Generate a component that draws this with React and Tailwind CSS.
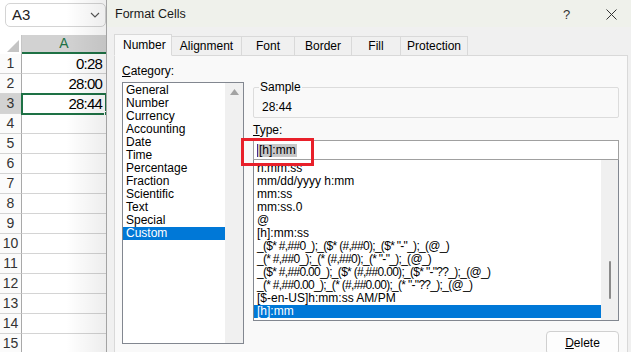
import React from 'react'

const categories = ['General', 'Number', 'Currency', 'Accounting', 'Date', 'Time', 'Percentage', 'Fraction', 'Scientific', 'Text', 'Special', 'Custom']

const types = [
  'h:mm:ss',
  'mm/dd/yyyy h:mm',
  'mm:ss',
  'mm:ss.0',
  '@',
  '[h]:mm:ss',
  '_($* #,##0_);_($* (#,##0);_($* "-"_);_(@_)',
  '_(* #,##0_);_(* (#,##0);_(* "-"_);_(@_)',
  '_($* #,##0.00_);_($* (#,##0.00);_($* "-"??_);_(@_)',
  '_(* #,##0.00_);_(* (#,##0.00);_(* "-"??_);_(@_)',
  '[$-en-US]h:mm:ss AM/PM',
  '[h]:mm',
]

const tabs = [
  { name: 'Number', w: 'w-[58px]' },
  { name: 'Alignment', w: 'w-[71px]' },
  { name: 'Font', w: 'w-[54px]' },
  { name: 'Border', w: 'w-[58px]' },
  { name: 'Fill', w: 'w-[50px]' },
  { name: 'Protection', w: 'w-[68px]' },
]

const cells = ['0:28', '28:00', '28:44']

const Sheet = () => (
  <div className="relative w-[106px] shrink-0 bg-white overflow-hidden font-['Liberation_Sans',sans-serif]">
    <div className="h-[35px] pt-[3px] pl-[5px]">
      <div className="w-[101px] h-[24px] rounded-[5px] border border-[#d4d4d4] flex items-center justify-between pl-[6px] pr-[5px] text-[15px] text-[#222]">
        <span>A3</span>
        <svg width="10" height="6" viewBox="0 0 10 6"><path d="M1 1 L5 5 L9 1" fill="none" stroke="#555" strokeWidth="1.1" /></svg>
      </div>
    </div>
    <div className="flex h-[19px]">
      <div className="w-[22px] border-r border-[#c6c6c6] flex items-end justify-end pr-[2px] pb-[2px]">
        <svg width="12" height="12" viewBox="0 0 12 12"><path d="M12 0 L12 12 L0 12 Z" fill="#c4c4c4" /></svg>
      </div>
      <div className="w-[84px] bg-[#d2d2d2] border-b-2 border-[#1e7145] text-center text-[14px] leading-[17px] text-[#1e7145]">A</div>
    </div>
    {Array.from({ length: 15 }, (_, i) => (
      <div key={i} className="flex h-[20px]">
        <div className={`w-[22px] border-r border-[#a9a9a9] border-b border-b-[#d4d4d4] text-center text-[14px] leading-[19px] text-[#333] ${i === 2 ? 'bg-[#d2d2d2]' : 'bg-[#fbfbfb]'}`}>{i + 1}</div>
        <div className={`relative w-[84px] border-b border-[#d4d4d4] text-right pr-[4px] text-[15px] leading-[19px] tracking-[-0.8px] text-black ${i === 2 ? 'outline-2 outline-[#1e7145] -outline-offset-1' : ''}`}>
          {cells[i] || ''}
          {i === 2 && <div className="absolute right-[-3px] bottom-[-3px] w-[5px] h-[5px] bg-[#1e7145] border border-white" />}
        </div>
      </div>
    ))}
    <div className="absolute inset-y-0 right-0 w-[40px] bg-gradient-to-r from-transparent to-[#00000012] pointer-events-none" />
  </div>
)

const Dialog = () => (
  <div className="flex-1 flex flex-col bg-[#f0f0f0] border-l border-[#a3a3a3] font-['Liberation_Sans',sans-serif] text-[12px] text-black overflow-hidden">
    <div className="h-[27px] shrink-0 bg-[#eff1eb] flex items-center pl-[8px] pt-[2px]">
      <span className="flex-1 text-[12.5px] text-[#1a1a1a]">Format Cells</span>
      <span className="text-[13px] text-[#333] w-[10px] mr-[33px]">?</span>
      <svg width="11" height="11" viewBox="0 0 11 11" className="mr-[14px]"><path d="M0.5 0.5 L10.5 10.5 M10.5 0.5 L0.5 10.5" stroke="#333" strokeWidth="1" /></svg>
    </div>
    <div className="flex-1 pl-[7px] pr-[3px] pt-[7px]">
      <div className="flex items-end h-[22px]">
        {tabs.map((t, i) => (
          <div
            key={t.name}
            className={`${t.w} border border-[#d9d9d9] -ml-px first:ml-0 text-center ${i === 0 ? 'h-[22px] bg-[#f9f9f9] border-b-[#f9f9f9] relative z-10 leading-[21px] text-left pl-[8px]' : 'h-[20px] bg-[#f0f0f0] leading-[19px]'}`}
          >
            {t.name}
          </div>
        ))}
      </div>
      <div className="-mt-px h-[300px] border border-[#d9d9d9] bg-[#f9f9f9] flex pl-[7px]">
        <div className="w-[122px] shrink-0">
          <div className="mt-[8px] h-[15px] leading-[15px]"><span className="underline">C</span>ategory:</div>
          <div className="mt-[3px] h-[262px] border border-[#828790] bg-white flex">
            <div className="flex-1 pt-[1px]">
              {categories.map((c) => (
                <div key={c} className={`h-[13px] leading-[13px] pl-[3px] ${c === 'Custom' ? 'bg-[#0078d7] text-white' : ''}`}>{c}</div>
              ))}
            </div>
            <div className="w-[18px] bg-[#f0f0f0] flex justify-center pt-[6px]">
              <svg width="9" height="6" viewBox="0 0 9 6"><path d="M4.5 0 L9 6 L0 6 Z" fill="#a3a3a3" /></svg>
            </div>
          </div>
        </div>
        <div className="w-[366px] ml-[9px]">
          <fieldset className="mt-[24px] h-[38px] border border-[#dcdcdc] rounded-[2px] px-[5px]">
            <legend className="px-[1px] leading-[14px]">Sample</legend>
            <div className="pl-[3px] pt-[6px] leading-[14px]">28:44</div>
          </fieldset>
          <div className="mt-[5px] h-[15px] leading-[15px]"><span className="underline">T</span>ype:</div>
          <div className="relative mt-[2px] h-[20px] border border-[#a0a0a0] bg-white flex items-center pl-[3px]">
            <span className="bg-[#c8c8c8] leading-[13px] px-[1px] border-l border-[#4b2a8a]">[h]:mm</span>
            <div className="absolute left-[-13px] top-[-3px] w-[73px] h-[28px] border-[3px] border-[#e8202a] pointer-events-none" />
          </div>
          <div className="h-[161px] border border-[#828790] border-t-0 bg-white flex">
            <div className="flex-1 pt-[2px] whitespace-nowrap overflow-hidden">
              {types.map((t, i) => (
                <div key={i} className={`h-[13px] leading-[13px] pl-[3px] ${t.startsWith('_(') ? 'tracking-[-0.7px]' : ''} ${i === types.length - 1 ? 'bg-[#0078d7] text-white' : ''}`}>{t}</div>
              ))}
            </div>
            <div className="w-[17px] bg-[#f0f0f0] flex justify-center pt-[101px]">
              <div className="w-[2px] h-[38px] bg-[#8a8a8a] rounded-full" />
            </div>
          </div>
          <div className="flex justify-end mt-[10px]">
            <div className="w-[73px] h-[24px] rounded-[4px] border border-[#d0d0d0] bg-[#fdfdfd] text-center leading-[22px]">
              <span className="underline">D</span>elete
            </div>
          </div>
        </div>
      </div>
    </div>
  </div>
)

export default function App() {
  return (
    <div className="w-[631px] h-[352px] flex overflow-hidden">
      <Sheet />
      <Dialog />
    </div>
  )
}
